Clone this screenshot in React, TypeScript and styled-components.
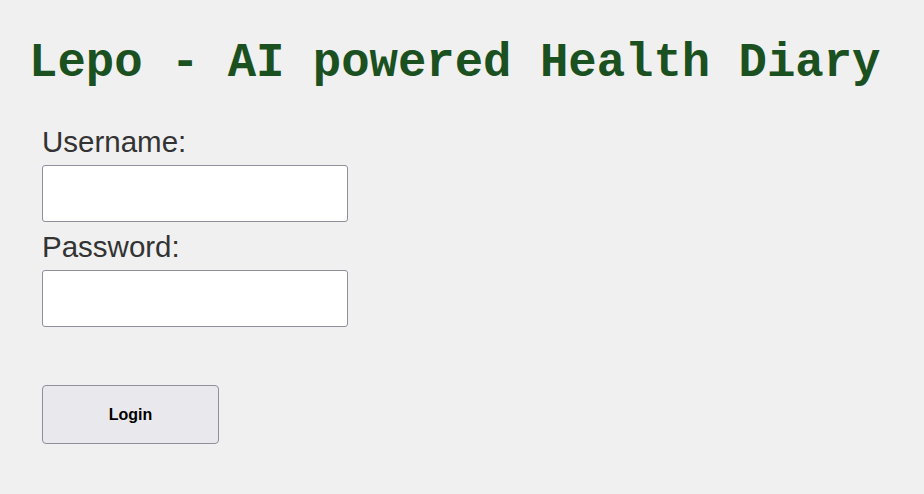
import React, { useState } from 'react';
import styled, { createGlobalStyle } from 'styled-components';

const GlobalStyle = createGlobalStyle`
  body {
    margin: 0;
    background: #f0f0f0;
    font-family: 'Liberation Sans', Arial, sans-serif;
  }
`;

const App = () => {
  const [username, setUsername] = useState('');
  const [password, setPassword] = useState('');

  return (
    <Page>
      <GlobalStyle />
      <Title>Lepo - AI powered Health Diary</Title>

      <Form onSubmit={(e) => e.preventDefault()}>
        <Label htmlFor="username">Username:</Label>
        <TextInput
          id="username"
          value={username}
          onChange={({ target: { value } }) => setUsername(value)}
        />
        <Label htmlFor="password">Password:</Label>
        <TextInput
          id="password"
          type="password"
          value={password}
          onChange={({ target: { value } }) => setPassword(value)}
        />
        <LoginButton type="submit">Login</LoginButton>
      </Form>
    </Page>
  );
};

export default App;

const Page = styled.div`
  padding-top: 40px;
`;

const Title = styled.h1`
  margin: 0;
  padding-left: 29px;

  font-family: 'Liberation Mono', 'Courier New', monospace;
  font-size: 47.3px;
  font-weight: bold;
  line-height: 47px;
  color: #1b5020;
`;

const Form = styled.form`
  display: flex;
  flex-direction: column;
  align-items: flex-start;

  margin-top: 38px;
  padding-left: 42px;
`;

const Label = styled.label`
  font-size: 29.5px;
  line-height: 33px;
  color: #333333;

  margin-bottom: 7px;
`;

const TextInput = styled.input`
  box-sizing: border-box;
  width: 306px;
  height: 57px;

  border: 1px solid #8f8f9d;
  border-radius: 3px;
  background: #ffffff;

  margin-bottom: 8px;
`;

const LoginButton = styled.button`
  box-sizing: border-box;
  width: 177px;
  height: 59px;

  margin-top: 50px;

  border: 1px solid #8f8f9d;
  border-radius: 4px;
  background: #e9e9ed;

  font-family: 'Liberation Sans', Arial, sans-serif;
  font-size: 16px;
  font-weight: bold;
  color: #000000;
`;
